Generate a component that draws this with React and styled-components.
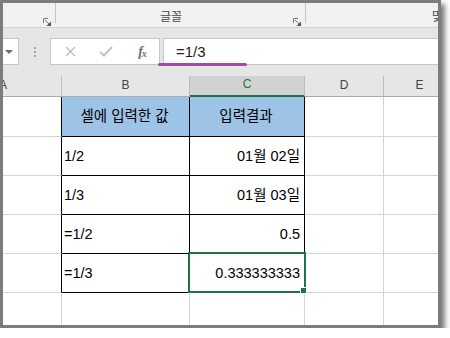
import React from "react"
import styled, { createGlobalStyle } from "styled-components"

const Global = createGlobalStyle`
  body { margin: 0; background: #fff; }
`

const Frame = styled.div`
  width: 441px;
  height: 328px;
  box-sizing: border-box;
  border: 3px solid #7c7c7c;
  box-shadow: 4px 4px 5px rgba(0, 0, 0, 0.5);
  background: #fff;
  overflow: hidden;
  display: flex;
  flex-direction: column;
  font-family: "Liberation Sans", "Noto Sans CJK KR", sans-serif;
`

const Ribbon = styled.div`
  height: 24px;
  flex: none;
  display: flex;
  align-items: flex-start;
  background: #f1f1f1;
  border-bottom: 1px solid #d2d2d2;
`

const Group = styled.div`
  position: relative;
  flex: none;
  width: ${p => p.$w}px;
  height: 20px;
  box-sizing: border-box;
  border-right: ${p => (p.$sep ? "1px solid #c6c6c6" : "none")};
  display: flex;
  align-items: flex-end;
  padding-left: ${p => p.$pl || 0}px;
  font-family: "Noto Sans CJK KR", sans-serif;
  font-size: 12px;
  color: #474747;
  line-height: 1;
  white-space: nowrap;
`

const Launcher = styled.svg`
  position: absolute;
  right: 4px;
  bottom: -3px;
`

const FormulaBar = styled.div`
  position: relative;
  height: 48px;
  flex: none;
  box-sizing: border-box;
  padding-top: 10px;
  display: flex;
  align-items: flex-start;
  background: #e6e6e6;
`

const Box = styled.div`
  height: 27px;
  box-sizing: border-box;
  background: #fff;
  border: 1px solid #c6c6c6;
  flex: none;
`

const NameBox = styled(Box)`
  width: 16px;
  border-left: none;
  display: flex;
  align-items: center;
  justify-content: center;
  padding-right: 3px;
`

const Caret = styled.div`
  width: 0;
  height: 0;
  border-left: 4px solid transparent;
  border-right: 4px solid transparent;
  border-top: 4px solid #6a6a6a;
`

const Grip = styled.div`
  margin: 9px 0 0 15px;
  width: 2px;
  display: flex;
  flex-direction: column;
  gap: 2px;
  span {
    width: 2px;
    height: 2px;
    background: #a3a3a3;
  }
`

const FxBox = styled(Box)`
  margin-left: 14px;
  width: 110px;
  padding-left: 1px;
  display: grid;
  grid-template-columns: repeat(3, 36px);
  align-items: center;
  justify-items: center;
`

const Fx = styled.span`
  font-family: "Liberation Serif", serif;
  font-style: italic;
  font-weight: bold;
  font-size: 14px;
  color: #6f6f6f;
  letter-spacing: -1px;
  sub {
    font-size: 10px;
    vertical-align: -1px;
  }
`

const FormulaInput = styled(Box)`
  margin-left: 3px;
  flex: 1;
  border-right: none;
  padding-left: 12px;
  display: flex;
  align-items: center;
  font-size: 15px;
  color: #222;
`

const Mark = styled.div`
  position: absolute;
  left: 155px;
  top: 35px;
  width: 89px;
  height: 3px;
  border-radius: 2px;
  background: #a449a6;
`

const Sheet = styled.div`
  flex: 1;
  display: grid;
  grid-template-columns: 59px 128px 115px 79px 72px;
  grid-template-rows: 21px 40px repeat(5, 39px);
  overflow: hidden;
`

const Head = styled.div`
  box-sizing: border-box;
  overflow: hidden;
  display: flex;
  align-items: center;
  justify-content: ${p => (p.$cut ? "flex-start" : "center")};
  padding-bottom: 3px;
  background: ${p => (p.$on ? "#d2d2d2" : "#e6e6e6")};
  border-right: 1px solid #bdbdbd;
  border-bottom: ${p => (p.$on ? "2px solid #217346" : "1px solid #ababab")};
  color: ${p => (p.$on ? "#217346" : "#444")};
  font-size: 12px;
  span { margin-left: ${p => (p.$cut ? "-4px" : "0")}; }
`

const Cell = styled.div`
  position: relative;
  box-sizing: border-box;
  display: flex;
  align-items: center;
  justify-content: ${p => p.$align === "right" ? "flex-end" : p.$align === "center" ? "center" : "flex-start"};
  padding: 0 4px 0 2px;
  background: ${p => (p.$head ? "#9dc3e6" : "#fff")};
  border-right: 1px solid ${p => (p.$edge ? "#000" : "#d4d4d4")};
  border-bottom: 1px solid ${p => (p.$table ? "#000" : "#d4d4d4")};
  font-size: 14.5px;
  line-height: 1;
  color: #000;
  white-space: nowrap;
  ${p => p.$selected && `
    &::after {
      content: "";
      position: absolute;
      top: -2px;
      left: -2px;
      right: -2px;
      bottom: -1px;
      border: 2px solid #217346;
      z-index: 2;
    }
  `}
`

const Handle = styled.div`
  position: absolute;
  right: -3px;
  bottom: -2px;
  width: 5px;
  height: 5px;
  background: #217346;
  border: 1px solid #fff;
  z-index: 3;
`

const rows = [
  ["1/2", "01월 02일"],
  ["1/3", "01월 03일"],
  ["=1/2", "0.5"],
  ["=1/3", "0.333333333"],
]

const LauncherIcon = () => (
  <Launcher width="8" height="8" viewBox="0 0 8 8">
    <path d="M0.5 5V0.5H5" fill="none" stroke="#7a7a7a" />
    <path d="M2 2L6 6" stroke="#7a7a7a" />
    <path d="M8 3.5V8H3.5Z" fill="#555" />
  </Launcher>
)

const App = () => {
  return (
    <>
      <Global />
      <Frame>
        <Ribbon>
          <Group $w={53} $sep>
            <LauncherIcon />
          </Group>
          <Group $w={250} $sep $pl={104}>
            <span style={{ marginBottom: 1 }}>글꼴</span>
            <LauncherIcon />
          </Group>
          <Group $w={160} $pl={126}>
            <span style={{ marginBottom: 1 }}>맞춤</span>
          </Group>
        </Ribbon>

        <FormulaBar>
          <NameBox><Caret /></NameBox>
          <Grip><span /><span /><span /></Grip>
          <FxBox>
            <svg width="11" height="11" viewBox="0 0 11 11">
              <path d="M1 1L10 10M10 1L1 10" stroke="#bdbdbd" strokeWidth="1.4" />
            </svg>
            <svg width="14" height="11" viewBox="0 0 14 11">
              <path d="M1 6L5 9.5L13 1" fill="none" stroke="#c2c2c2" strokeWidth="2" />
            </svg>
            <Fx>f<sub>x</sub></Fx>
          </FxBox>
          <FormulaInput>=1/3</FormulaInput>
          <Mark />
        </FormulaBar>

        <Sheet>
          <Head $cut><span>A</span></Head>
          <Head>B</Head>
          <Head $on>C</Head>
          <Head>D</Head>
          <Head>E</Head>

          <Cell $edge />
          <Cell $head $table $edge $align="center">셀에 입력한 값</Cell>
          <Cell $head $table $edge $align="center">입력결과</Cell>
          <Cell />
          <Cell />

          {rows.map(([a, b], i) => (
            <React.Fragment key={i}>
              <Cell $edge />
              <Cell $table $edge>{a}</Cell>
              <Cell $table $edge $align="right" $selected={i === 3}>
                {b}
                {i === 3 && <Handle />}
              </Cell>
              <Cell />
              <Cell />
            </React.Fragment>
          ))}

          <Cell />
          <Cell />
          <Cell />
          <Cell />
          <Cell />
        </Sheet>
      </Frame>
    </>
  )
}

export default App
